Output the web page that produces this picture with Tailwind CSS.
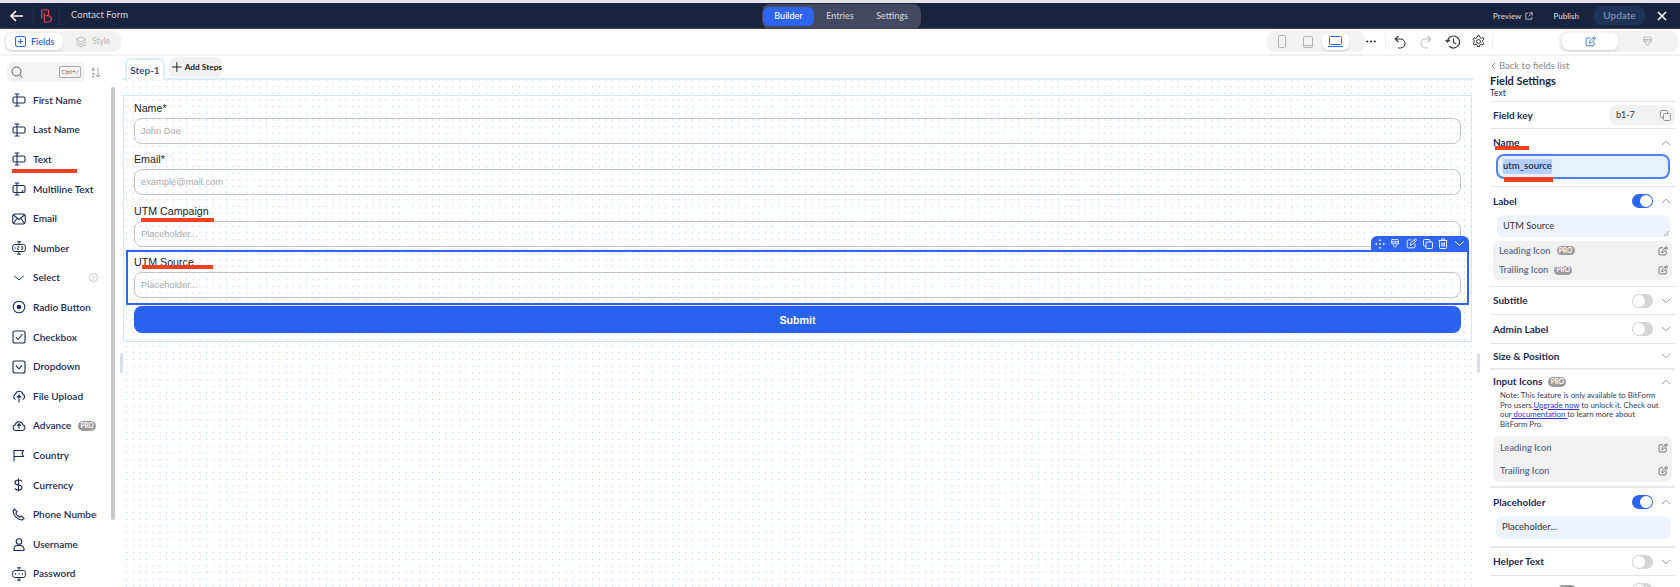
<!DOCTYPE html>
<html lang="en">
<head>
<meta charset="UTF-8">
<title>Contact Form</title>
<script src="https://cdn.jsdelivr.net/npm/@tailwindcss/browser@4"></script>
</head>
<body class="bg-white overflow-hidden">
<!-- shared icons -->
<svg class="hidden">
  <symbol id="i-text" viewBox="0 0 14 14" fill="none" stroke="currentColor" stroke-width="1.100" stroke-linecap="round" stroke-linejoin="round"><path d="M3 1h4M5 1v12M3 13h4"/><rect x="1" y="4" width="12" height="6" rx="1.500"/></symbol>
  <symbol id="i-multi" viewBox="0 0 14 14" fill="none" stroke="currentColor" stroke-width="1.100" stroke-linecap="round" stroke-linejoin="round"><path d="M3 1h4M5 1v12M3 13h4M11 8.500l-1 2"/><rect x="1" y="3.500" width="12" height="7" rx="1.500"/></symbol>
  <symbol id="i-edit" viewBox="0 0 14 14" fill="none" stroke="currentColor" stroke-width="1.100" stroke-linecap="round" stroke-linejoin="round"><path d="M6.500 2.500H3A1.500 1.500 0 0 0 1.500 4v7A1.500 1.500 0 0 0 3 12.500h7a1.500 1.500 0 0 0 1.500-1.500V7.500"/><path d="M5.500 8.800l.5-2.300 5-5a1.100 1.100 0 0 1 1.600 0l.3.300a1.100 1.100 0 0 1 0 1.600l-5 5z"/><path d="M10 2.500l1.800 1.800"/></symbol>
  <symbol id="i-brush" viewBox="0 0 14 14" fill="none" stroke="currentColor" stroke-width="1.100" stroke-linecap="round" stroke-linejoin="round"><path d="M3 1.500h8a.8.800 0 0 1 .8.800v4.200H2.200V2.300a.8.800 0 0 1 .8-.8zM2.200 4.500h9.600M2.200 6.500c0 1.500 1.300 1.500 3 2v2l1.800 2 1.800-2v-2c1.700-.5 3-.5 3-2"/></symbol>
  <symbol id="i-down" viewBox="0 0 12 12" fill="none" stroke="currentColor" stroke-width="1" stroke-linecap="round" stroke-linejoin="round"><path d="M1.500 4l4.500 4 4.500-4"/></symbol>
  <symbol id="i-up" viewBox="0 0 12 12" fill="none" stroke="currentColor" stroke-width="1" stroke-linecap="round" stroke-linejoin="round"><path d="M1.500 8l4.500-4 4.500 4"/></symbol>
</svg>

<div class="relative w-[1680px] h-[587px] overflow-hidden flex flex-col font-[family-name:Lato,sans-serif] text-[#1b2a55]">
  <!-- top nav -->
  <div class="h-[3px] bg-[#e4e4e6] shrink-0"></div>
  <header class="h-[26px] shrink-0 bg-[#17233f] border-b border-[#3c465c] relative flex items-center text-[#d5d8df]">
    <svg class="ml-[9px] w-[15px] h-[14px] text-white" viewBox="0 0 15 14" fill="none" stroke="currentColor" stroke-width="1.600"><path d="M14 7H2M7 2L2 7l5 5"/></svg>
    <div class="ml-[9px] w-px h-[20px] bg-[#25314c]"></div>
    <svg class="ml-[7px] w-[11px] h-[14px] text-[#ef4450]" viewBox="0 0 11 14" fill="none" stroke="currentColor" stroke-width="1.100"><path d="M.7 10V1H7.500V5L6 6.800H3.300M3.300 3.500V13H8L10.300 11.500V8.500L8 6.800H5.500"/></svg>
    <div class="ml-[7px] w-px h-[20px] bg-[#25314c]"></div>
    <span class="ml-[11px] text-[9.500px]">Contact Form</span>

    <nav class="absolute left-[762px] top-[0.500px] w-[159px] h-[25px] rounded-lg bg-[#444860] flex items-center px-px text-[9px] font-medium">
      <span class="w-[51px] h-[19px] rounded-md bg-[#2d64f0] text-white flex items-center justify-center">Builder</span>
      <span class="w-[52px] text-center text-[#cdd0da]">Entries</span>
      <span class="w-[52px] text-center text-[#cdd0da]">Settings</span>
    </nav>

    <div class="ml-auto flex items-center text-[8px] font-medium">
      <span>Preview</span>
      <svg class="ml-[4px] w-[8px] h-[8px]" viewBox="0 0 10 10" fill="none" stroke="currentColor" stroke-width="1"><path d="M4 1.500H1v7.500h7.500V6M5.500 1h3.500v3.500M9 1L4.500 5.500"/></svg>
      <span class="ml-[20px]">Publish</span>
      <span class="ml-[15px] w-[51px] h-[19px] rounded-lg bg-[#1f3358] text-[#8797b5] text-[10px] flex items-center justify-center">Update</span>
      <svg class="ml-[12px] mr-[13px] w-[10px] h-[10px] text-white" viewBox="0 0 10 10" fill="none" stroke="currentColor" stroke-width="1.500"><path d="M1 1l8 8M9 1L1 9"/></svg>
    </div>
  </header>

  <!-- toolbar -->
  <div class="h-[27px] shrink-0 border-b-2 border-[#f3f3f3] flex items-center">
    <div class="ml-[4px] w-[117px] h-[21px] rounded-lg bg-[#f2f2f2] flex items-center px-[2px]">
      <div class="w-[57px] h-[17px] rounded-md bg-white shadow-[0_1px_2px_#0002] flex items-center pl-[9px] text-[9px] font-semibold text-[#2d64f0]">
        <svg class="w-[11px] h-[11px] mr-[5px]" viewBox="0 0 11 11" fill="none" stroke="currentColor" stroke-width="1"><rect x=".5" y=".5" width="10" height="10" rx="1.500"/><path d="M5.500 3v5M3 5.500h5"/></svg>Fields
      </div>
      <div class="flex items-center ml-[12px] text-[8.500px] text-[#b5b5b5]">
        <svg class="w-[12px] h-[12px] mr-[5px]" viewBox="0 0 12 12" fill="none" stroke="currentColor" stroke-width=".9"><path d="M6 1l5 2.500L6 6 1 3.500zM1 6l5 2.500L11 6M1 8.500L6 11l5-2.500"/></svg>Style
      </div>
    </div>

    <div class="ml-[1146px] w-[98px] h-[21px] rounded-lg bg-[#f2f2f2] flex items-center text-[#b3b3b3]">
      <svg class="ml-[11px] w-[8px] h-[13px]" viewBox="0 0 8 13" fill="none" stroke="currentColor"><rect x=".5" y=".5" width="7" height="12" rx="1.500"/></svg>
      <svg class="ml-[17px] w-[10px] h-[12px]" viewBox="0 0 10 12" fill="none" stroke="currentColor"><rect x=".5" y=".5" width="9" height="11" rx="1.500"/><path d="M.5 9.500h9"/></svg>
      <span class="ml-[9px] w-[27px] h-[17px] rounded-md bg-white shadow-[0_1px_2px_#0002] flex items-center justify-center text-[#2d64f0]">
        <svg class="w-[15px] h-[11px]" viewBox="0 0 15 11" fill="none" stroke="currentColor"><rect x="1.500" y=".5" width="12" height="8" rx="1"/><path d="M0 10.500h15"/></svg>
      </span>
    </div>
    <svg class="ml-[1px] w-[10px] h-[3px] text-[#2a2f3a]" viewBox="0 0 10 3" fill="currentColor"><circle cx="1.200" cy="1.500" r="1.100"/><circle cx="5" cy="1.500" r="1.100"/><circle cx="8.800" cy="1.500" r="1.100"/></svg>
    <div class="ml-[9px] w-px h-[16px] bg-[#eeeeee]"></div>
    <svg class="ml-[8px] w-[12px] h-[14px] text-[#333]" viewBox="0 0 12 14" fill="none" stroke="currentColor" stroke-width="1.100"><path d="M4.500 1L1.200 4l3.300 3M1.500 4h5a4.300 4.300 0 0 1 0 9H4"/></svg>
    <svg class="ml-[14px] w-[12px] h-[14px] text-[#bdbdbd]" viewBox="0 0 12 14" fill="none" stroke="currentColor" stroke-width="1.100"><path d="M7.500 1l3.300 3-3.300 3M10.500 4h-5a4.300 4.300 0 0 0 0 9H8"/></svg>
    <svg class="ml-[13px] w-[15px] h-[14px] text-[#333]" viewBox="0 0 15 14" fill="none" stroke="currentColor" stroke-width="1.200"><path d="M2.500 7a6 6 0 1 1 1.800 4.300M.5 5l2 2 2.300-2M8.500 3.500V7.500l2.500 1.500"/></svg>
    <svg class="ml-[12px] w-[13px] h-[13px] text-[#333]" viewBox="0 0 13 13" fill="none" stroke="currentColor" stroke-width="1"><circle cx="6.500" cy="6.500" r="2"/><path d="M5.500 .8h2l.4 1.700 1.400.7 1.600-.7 1 1.700-1.200 1.200v1.600l1.200 1.200-1 1.700-1.600-.7-1.400.7-.4 1.700h-2l-.4-1.700-1.400-.7-1.600.7-1-1.700L2.200 7.300V5.700L1 4.500l1-1.700 1.600.7L5.100 2.500z"/></svg>
    <div class="ml-[7px] w-px h-[16px] bg-[#eeeeee]"></div>
    <div class="ml-[66px] w-[119px] h-[21px] rounded-lg bg-[#f2f2f2] flex items-center pl-[3px]">
      <span class="w-[56px] h-[17px] rounded-md bg-white shadow-[0_1px_2px_#0002] flex items-center justify-center text-[#2d64f0]"><svg class="w-[11px] h-[11px]"><use href="#i-edit"/></svg></span>
      <svg class="ml-[24px] w-[11px] h-[11px] text-[#b3b3b3]"><use href="#i-brush"/></svg>
    </div>
  </div>

  <!-- main area -->
  <div class="flex-1 min-h-0 flex">
    <!-- field list -->
    <aside class="relative w-[122px] shrink-0 overflow-hidden">
      <div class="mt-[6px] flex items-center">
        <div class="ml-[7px] w-[78px] h-[20px] rounded-md bg-[#f3f3f3] flex items-center">
          <svg class="ml-[4px] w-[12px] h-[12px] text-[#555]" viewBox="0 0 12 12" fill="none" stroke="currentColor"><circle cx="5.500" cy="5.500" r="4.500"/><path d="M9 9l2.500 2.500"/></svg>
          <span class="ml-auto mr-[4px] w-[22px] h-[12px] rounded-[2px] border border-[#aaa] text-[6.500px] text-[#666] flex items-center justify-center">Ctrl+/</span>
        </div>
        <svg class="ml-[6px] w-[10px] h-[11px] text-[#8a8a8a]" viewBox="0 0 10 11" fill="none" stroke="currentColor" stroke-width=".8"><path d="M7 .5v9.500M4.800 7.800L7 10l2.200-2.200M1 4l1.200-3.500L3.400 4M1.400 3h1.600M1 6.500h2.400L1 10h2.400"/></svg>
      </div>
      <ul class="mt-[3.500px] text-[10px] font-semibold">
        <li class="h-[29.600px] flex items-center"><svg class="ml-[12px] w-[14px] h-[14px]"><use href="#i-text"/></svg><span class="ml-[7px]">First Name</span></li>
        <li class="h-[29.600px] flex items-center"><svg class="ml-[12px] w-[14px] h-[14px]"><use href="#i-text"/></svg><span class="ml-[7px]">Last Name</span></li>
        <li class="h-[29.600px] flex items-center"><svg class="ml-[12px] w-[14px] h-[14px]"><use href="#i-text"/></svg><span class="ml-[7px]">Text</span></li>
        <li class="h-[29.600px] flex items-center"><svg class="ml-[12px] w-[14px] h-[14px]"><use href="#i-multi"/></svg><span class="ml-[7px]">Multiline Text</span></li>
        <li class="h-[29.600px] flex items-center"><svg class="ml-[12px] w-[14px] h-[12px]" viewBox="0 0 14 12" fill="none" stroke="currentColor" stroke-width="1.100"><rect x=".7" y="1" width="12.600" height="10" rx="2.500"/><path d="M1.500 2l5.500 4.500L12.500 2M1.500 10.300L5 5.500M12.500 10.300L9 5.500"/></svg><span class="ml-[7px]">Email</span></li>
        <li class="h-[29.600px] flex items-center"><svg class="ml-[12px] w-[14px] h-[14px]" viewBox="0 0 14 14" fill="none" stroke="currentColor" stroke-width="1"><path d="M5 .8h4M7 .8v2.700M7 10.500v2.700M5 13.200h4"/><rect x=".7" y="3.500" width="12.600" height="7" rx="2"/><path d="M3 5.500v3M5.500 5.500h1.500v1.500h-1.500v1.500h1.500M9 5.500h1.800v3H9M9 7h1.800" stroke-width=".7"/></svg><span class="ml-[7px]">Number</span></li>
        <li class="h-[29.600px] flex items-center"><svg class="ml-[13px] w-[12px] h-[12px]"><use href="#i-down"/></svg><span class="ml-[8px]">Select</span><span class="ml-[29px] w-[9px] h-[9px] rounded-full border border-[#c4c4c4] text-[6.500px] text-[#bbb] flex items-center justify-center">?</span></li>
        <li class="h-[29.600px] flex items-center"><svg class="ml-[12px] w-[14px] h-[14px]" viewBox="0 0 14 14"><circle cx="7" cy="7" r="5.800" fill="none" stroke="currentColor" stroke-width="1.100"/><circle cx="7" cy="7" r="2.300" fill="currentColor"/></svg><span class="ml-[7px]">Radio Button</span></li>
        <li class="h-[29.600px] flex items-center"><svg class="ml-[12px] w-[14px] h-[14px]" viewBox="0 0 14 14" fill="none" stroke="currentColor" stroke-width="1.100"><rect x="1" y="1" width="12" height="12" rx="2"/><path d="M3.800 7l2.200 2.500 4.500-5.500"/></svg><span class="ml-[7px]">Checkbox</span></li>
        <li class="h-[29.600px] flex items-center"><svg class="ml-[12px] w-[14px] h-[14px]" viewBox="0 0 14 14" fill="none" stroke="currentColor" stroke-width="1.100"><rect x="1" y="1" width="12" height="12" rx="2"/><path d="M3.800 5.500L7 8.800l3.200-3.300"/></svg><span class="ml-[7px]">Dropdown</span></li>
        <li class="h-[29.600px] flex items-center"><svg class="ml-[12px] w-[14px] h-[13px]" viewBox="0 0 14 13" fill="none" stroke="currentColor" stroke-width="1.100"><path d="M3.500 9.500A3 3 0 0 1 3.500 4 3.800 3.800 0 0 1 10.800 4a3 3 0 0 1 0 5.500M7 12.500V5.500M4.800 7.500L7 5.300l2.200 2.200"/></svg><span class="ml-[7px]">File Upload</span></li>
        <li class="h-[29.600px] flex items-center"><svg class="ml-[12px] w-[14px] h-[13px]" viewBox="0 0 14 13" fill="none" stroke="currentColor" stroke-width="1.100"><path d="M3.500 11.500a3 3 0 0 1-.3-5.800 3.900 3.900 0 0 1 7.600 0 3 3 0 0 1-.3 5.800z"/><path d="M7 9.500V5M5 6.800L7 4.800l2 2"/></svg><span class="ml-[7px]">Advance</span><span class="ml-[7px] w-[18px] h-[10px] rounded-full bg-[#9a9a9a] text-white text-[6.500px] font-bold flex items-center justify-center">PRO</span></li>
        <li class="h-[29.600px] flex items-center"><svg class="ml-[13px] w-[12px] h-[13px]" viewBox="0 0 12 13" fill="none" stroke="currentColor" stroke-width="1.100"><path d="M1 12.500V1.500h9.500L9 4.500l1.500 3H1"/></svg><span class="ml-[8px]">Country</span></li>
        <li class="h-[29.600px] flex items-center"><svg class="ml-[14px] w-[9px] h-[14px]" viewBox="0 0 9 14" fill="none" stroke="currentColor" stroke-width="1.200"><path d="M4.500 .5v13M8 3.500C7.500 2.300 6 2 4.500 2 2.500 2 1 3 1 4.500S2.500 6.700 4.500 7s3.500 1 3.500 2.500S6.500 12 4.500 12C3 12 1.500 11.700 1 10.500"/></svg><span class="ml-[10px]">Currency</span></li>
        <li class="h-[29.600px] flex items-center"><svg class="ml-[12px] w-[13px] h-[13px] shrink-0" viewBox="0 0 13 13" fill="none" stroke="currentColor" stroke-width="1.100"><path d="M1 2.500L2.500 1 5 3.500 3.800 5.200c.7 1.600 2.400 3.300 4 4L9.500 8l2.500 2.500-1.500 1.500C5.500 12 1 7.500 1 2.500z"/></svg><span class="ml-[8px] w-[64px] overflow-hidden whitespace-nowrap">Phone Number</span></li>
        <li class="h-[29.600px] flex items-center"><svg class="ml-[13px] w-[12px] h-[13px]" viewBox="0 0 12 13" fill="none" stroke="currentColor" stroke-width="1.100"><circle cx="6" cy="3.500" r="2.800"/><path d="M1 12.500v-1.500a3.500 3.500 0 0 1 3.500-3.500h3A3.500 3.500 0 0 1 11 11v1.500z"/></svg><span class="ml-[8px]">Username</span></li>
        <li class="h-[29.600px] flex items-center"><svg class="ml-[12px] w-[14px] h-[14px]" viewBox="0 0 14 14" fill="none" stroke="currentColor" stroke-width="1"><path d="M5 .8h4M7 .8v2.700M7 10.500v2.700M5 13.200h4"/><rect x=".7" y="3.500" width="12.600" height="7" rx="2"/><path d="M3 7h1M6.500 7h1M10 7h1" stroke-width="1.500"/></svg><span class="ml-[7px]">Password</span></li>
      </ul>
      <div class="absolute left-[111px] top-[31px] w-[4px] h-[433px] rounded-full bg-[#c9c9c9]"></div>
    </aside>

    <!-- canvas -->
    <main class="relative w-[1351px] shrink-0">
      <div class="h-[24px] border-b-2 border-[#dcecf5] flex items-end gap-[4px] pl-[3px]">
        <span class="h-[22px] w-[40px] -mb-[2px] rounded-t-md border-2 border-b-0 border-[#dcecf5] bg-white flex items-center justify-center text-[10px] font-semibold text-[#24457d]">Step-1</span>
        <span class="mb-px h-[20px] w-[53px] rounded-md bg-[#f1f1f1] flex items-center pl-[3px] text-[8.300px] font-bold text-[#1c1c1c] whitespace-nowrap">
          <svg class="w-[10px] h-[10px] mr-[3px]" viewBox="0 0 10 10" fill="none" stroke="currentColor"><path d="M5 0v10M0 5h10"/></svg>Add Steps
        </span>
      </div>
      <div class="h-[508px] pt-[15px] bg-[radial-gradient(circle,#a5c3f5_0.7px,transparent_0.9px)] bg-[size:6.667px_6.667px] bg-[position:1.330px_3.330px] font-[family-name:'Liberation_Sans',sans-serif]">
        <form class="relative ml-px w-[1349px] h-[247px] border border-[#d4e6f3] pt-[5px] px-[10px] flex flex-col gap-[8.330px]">
          <div>
            <label class="block h-[14px] leading-[14px] text-[10.670px] text-[#222]">Name*</label>
            <input readonly placeholder="John Doe" class="mt-[3px] block w-[1327px] h-[26px] rounded-lg border border-[#c4c4c4] px-[6px] text-[9.330px] bg-transparent placeholder:text-[#aaaaaa]">
          </div>
          <div>
            <label class="block h-[14px] leading-[14px] text-[10.670px] text-[#222]">Email*</label>
            <input readonly placeholder="example@mail.com" class="mt-[3px] block w-[1327px] h-[26px] rounded-lg border border-[#c4c4c4] px-[6px] text-[9.330px] bg-transparent placeholder:text-[#aaaaaa]">
          </div>
          <div>
            <label class="block h-[14px] leading-[14px] text-[10.670px] text-[#222]">UTM Campaign</label>
            <input readonly placeholder="Placeholder..." class="mt-[3px] block w-[1327px] h-[26px] rounded-lg border border-[#c4c4c4] px-[6px] text-[9.330px] bg-transparent placeholder:text-[#aaaaaa]">
          </div>
          <div class="relative">
            <label class="block h-[14px] leading-[14px] text-[10.670px] text-[#222]">UTM Source</label>
            <input readonly placeholder="Placeholder..." class="mt-[3px] block w-[1327px] h-[26px] rounded-lg border border-[#c4c4c4] px-[6px] text-[9.330px] bg-transparent placeholder:text-[#aaaaaa]">
            <!-- selection frame and its floating toolbar -->
            <div class="absolute -left-[8px] -right-[8px] -top-[5px] -bottom-[7px] border-2 border-[#2d64f0] pointer-events-none">
              <div class="absolute -right-[2px] bottom-full w-[98px] h-[16px] rounded-t-md bg-[#2d64f0] text-white flex items-center justify-around px-[1px]">
                <svg class="w-[10px] h-[10px]" viewBox="0 0 10 10" fill="currentColor"><path d="M5 0l1.500 1.800h-3zM5 10l1.500-1.800h-3zM0 5l1.800-1.500v3zM10 5L8.200 3.500v3z"/><circle cx="5" cy="5" r=".9"/></svg>
                <svg class="w-[10px] h-[11px]"><use href="#i-brush"/></svg>
                <svg class="w-[11px] h-[11px]"><use href="#i-edit"/></svg>
                <svg class="w-[10px] h-[10px]" viewBox="0 0 10 10" fill="none" stroke="currentColor" stroke-width=".9"><rect x="3" y="3" width="6.500" height="6.500" rx="1"/><path d="M3 7H1.500a1 1 0 0 1-1-1V1.500a1 1 0 0 1 1-1H6a1 1 0 0 1 1 1V3"/></svg>
                <svg class="w-[10px] h-[11px]" viewBox="0 0 10 11" fill="none" stroke="currentColor" stroke-width=".9"><path d="M.5 2.500h9M3.500 2.500V1h3v1.500M1.500 2.500v7a1 1 0 0 0 1 1h5a1 1 0 0 0 1-1v-7M3.700 4.500v4M5 4.500v4M6.300 4.500v4"/></svg>
                <svg class="w-[11px] h-[11px]"><use href="#i-down"/></svg>
              </div>
            </div>
          </div>
          <button type="button" class="w-[1327px] h-[27px] rounded-lg bg-[#2862ef] text-white text-[10.670px] font-bold">Submit</button>
        </form>
        <div class="absolute left-[-2px] top-[297px] w-[3px] h-[20px] rounded-sm bg-[#d7dfef]"></div>
        <div class="absolute left-[1355px] top-[297px] w-[3px] h-[20px] rounded-sm bg-[#d7dfef]"></div>
      </div>
    </main>

    <!-- field settings -->
    <section class="relative ml-[7px] w-[200px] shrink-0 pl-[10px] pr-[5px] text-[10px] font-bold">
      <div class="h-[46px] border-b border-[#e3e3e3]">
        <div class="pt-[3px] h-[17px] text-[9.500px] font-normal text-[#8a8a8a] flex items-center"><svg class="w-[7px] h-[8px] mr-[2px]" viewBox="0 0 7 8" fill="none" stroke="currentColor"><path d="M5 1L2 4l3 3"/></svg>Back to fields list</div>
        <div class="text-[11px] leading-[15px] font-bold text-[#17233f]">Field Settings</div>
        <div class="text-[8.500px] leading-[11px] font-normal">Text</div>
      </div>
      <div class="h-[27px] border-b border-[#e3e3e3] flex items-center pl-[3px]">
        Field key
        <span class="ml-auto w-[65px] h-[20px] rounded-md bg-[#f1f1f1] flex items-center pl-[6px] text-[9px] font-normal text-[#333]">b1-7
          <svg class="ml-auto mr-[4px] w-[11px] h-[11px] text-[#8a8a8a]" viewBox="0 0 11 11" fill="none" stroke="currentColor" stroke-width=".9"><rect x="3.500" y="3.500" width="7" height="7" rx="1"/><path d="M3.500 7.500H1.500a1 1 0 0 1-1-1v-5a1 1 0 0 1 1-1h5a1 1 0 0 1 1 1v2"/></svg>
        </span>
      </div>
      <div class="h-[58px] border-b border-[#e3e3e3] pl-[3px]">
        <div class="h-[25px] pt-[2px] flex items-center justify-between">Name<svg class="mr-[4px] w-[10px] h-[10px] text-[#8a8a8a]"><use href="#i-up"/></svg></div>
        <div class="ml-[3px] w-[174px] h-[25px] rounded-lg border-2 border-[#4d82f5] bg-[#e9f0fd] flex items-center pl-[5px] text-[9.500px] font-semibold"><span class="bg-[#b4d0fa]">utm_source</span></div>
      </div>
      <div class="h-[100px] border-b border-[#e3e3e3] pl-[3px]">
        <div class="h-[28px] flex items-center">Label
          <span class="ml-auto w-[21px] h-[14px] rounded-full bg-[#2d64f0] relative"><span class="absolute right-[1px] top-[1px] w-[12px] h-[12px] rounded-full bg-white"></span></span>
          <svg class="ml-[8px] mr-[4px] w-[10px] h-[10px] text-[#8a8a8a]"><use href="#i-up"/></svg>
        </div>
        <div class="ml-[4px] w-[173px] h-[22px] rounded-md bg-[#eef2fb] flex items-center pl-[6px] text-[9.300px] font-normal text-[#333] relative">UTM Source
          <svg class="absolute right-[1px] bottom-[1px] w-[5px] h-[5px] text-[#777]" viewBox="0 0 5 5" fill="none" stroke="currentColor" stroke-width=".6"><path d="M0 5l5-5M2.500 5L5 2.500"/></svg>
        </div>
        <div class="mt-[4px] w-[179px] h-[39px] rounded-md bg-[#f1f1f1] text-[9.300px] font-semibold text-[#606a8c]">
          <div class="h-[19.500px] flex items-center pl-[6px]">Leading Icon<span class="ml-[6px] w-[18px] h-[9px] rounded-full bg-[#9a9a9a] text-white text-[6.500px] font-bold flex items-center justify-center">PRO</span><svg class="ml-auto mr-[4px] w-[10px] h-[10px] text-[#555]"><use href="#i-edit"/></svg></div>
          <div class="h-[19.500px] flex items-center pl-[6px]">Trailing Icon<span class="ml-[6px] w-[18px] h-[9px] rounded-full bg-[#9a9a9a] text-white text-[6.500px] font-bold flex items-center justify-center">PRO</span><svg class="ml-auto mr-[4px] w-[10px] h-[10px] text-[#555]"><use href="#i-edit"/></svg></div>
        </div>
      </div>
      <div class="h-[28px] border-b border-[#e3e3e3] flex items-center pl-[3px]">Subtitle
        <span class="ml-auto w-[21px] h-[14px] rounded-full bg-[#d5d5d5] relative"><span class="absolute left-[1px] top-[1px] w-[12px] h-[12px] rounded-full bg-white"></span></span>
        <svg class="ml-[8px] mr-[4px] w-[10px] h-[10px] text-[#8a8a8a]"><use href="#i-down"/></svg>
      </div>
      <div class="h-[29px] border-b border-[#e3e3e3] flex items-center pl-[3px]">Admin Label
        <span class="ml-auto w-[21px] h-[14px] rounded-full bg-[#d5d5d5] relative"><span class="absolute left-[1px] top-[1px] w-[12px] h-[12px] rounded-full bg-white"></span></span>
        <svg class="ml-[8px] mr-[4px] w-[10px] h-[10px] text-[#8a8a8a]"><use href="#i-down"/></svg>
      </div>
      <div class="h-[26px] border-b-2 border-[#e9e9e9] flex items-center pl-[3px]">Size &amp; Position
        <svg class="ml-auto mr-[4px] w-[10px] h-[10px] text-[#8a8a8a]"><use href="#i-down"/></svg>
      </div>
      <div class="h-[118px] border-b-2 border-[#e9e9e9] pl-[3px]">
        <div class="h-[21px] pt-[2px] flex items-center">Input Icons<span class="ml-[6px] w-[18px] h-[10px] rounded-full bg-[#9a9a9a] text-white text-[6.500px] font-bold flex items-center justify-center">PRO</span><svg class="ml-auto mr-[4px] w-[10px] h-[10px] text-[#8a8a8a]"><use href="#i-up"/></svg></div>
        <p class="ml-[7px] text-[7.800px] leading-[9.500px] font-normal text-[#333c5c] whitespace-nowrap">Note: This feature is only available to BitForm<br>Pro users.<a class="text-[#2a2fe8] underline">Upgrade now</a> to unlock it. Check out<br>our<a class="text-[#2a2fe8] underline"> documentation </a>to learn more about<br>BitForm Pro.</p>
        <div class="mt-[7px] w-[179px] h-[46px] rounded-md bg-[#f1f1f1] text-[9.300px] font-semibold text-[#606a8c]">
          <div class="h-[23px] flex items-center pl-[7px]">Leading Icon<svg class="ml-auto mr-[4px] w-[10px] h-[10px] text-[#555]"><use href="#i-edit"/></svg></div>
          <div class="h-[23px] flex items-center pl-[7px]">Trailing Icon<svg class="ml-auto mr-[4px] w-[10px] h-[10px] text-[#555]"><use href="#i-edit"/></svg></div>
        </div>
      </div>
      <div class="h-[60px] border-b-2 border-[#e9e9e9] pl-[3px]">
        <div class="h-[28px] flex items-center">Placeholder
          <span class="ml-auto w-[21px] h-[14px] rounded-full bg-[#2d64f0] relative"><span class="absolute right-[1px] top-[1px] w-[12px] h-[12px] rounded-full bg-white"></span></span>
          <svg class="ml-[8px] mr-[4px] w-[10px] h-[10px] text-[#8a8a8a]"><use href="#i-up"/></svg>
        </div>
        <div class="ml-[3px] w-[174px] h-[23px] rounded-md bg-[#eef2fb] flex items-center pl-[6px] text-[9.500px] font-normal text-[#333]">Placeholder...</div>
      </div>
      <div class="h-[28px] border-b border-[#e3e3e3] flex items-center pl-[3px]">Helper Text
        <span class="ml-auto w-[21px] h-[14px] rounded-full bg-[#d5d5d5] relative"><span class="absolute left-[1px] top-[1px] w-[12px] h-[12px] rounded-full bg-white"></span></span>
        <svg class="ml-[8px] mr-[4px] w-[10px] h-[10px] text-[#8a8a8a]"><use href="#i-down"/></svg>
      </div>
      <div class="h-[28px] flex items-center pl-[3px]">Default value<span class="ml-[6px] w-[18px] h-[10px] rounded-full bg-[#9a9a9a]"></span>
        <span class="ml-auto mr-[22px] w-[21px] h-[14px] rounded-full bg-[#d5d5d5] relative"><span class="absolute left-[1px] top-[1px] w-[12px] h-[12px] rounded-full bg-white"></span></span>
      </div>
    </section>
  </div>

  <!-- red annotation marks drawn over the screenshot -->
  <div class="absolute left-[12px] top-[169px] w-[65px] h-[4px] bg-[#ee4124]"></div>
  <div class="absolute left-[141px] top-[218px] w-[73px] h-[4px] bg-[#ee4124]"></div>
  <div class="absolute left-[142px] top-[265px] w-[71px] h-[4px] bg-[#ee4124]"></div>
  <div class="absolute left-[1495px] top-[146px] w-[34px] h-[4px] bg-[#ee4124]"></div>
  <div class="absolute left-[1504px] top-[177px] w-[49px] h-[5px] bg-[#ee4124]"></div>
</div>
</body>
</html>
